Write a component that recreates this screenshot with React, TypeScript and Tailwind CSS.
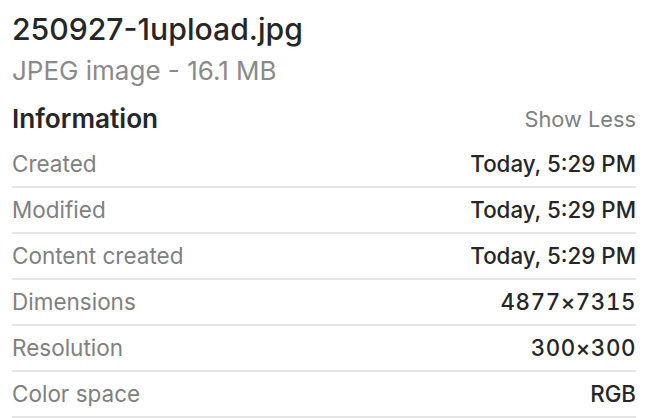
const rows = [
  { label: "Created", value: "Today, 5:29 PM", numeric: false },
  { label: "Modified", value: "Today, 5:29 PM", numeric: false },
  { label: "Content created", value: "Today, 5:29 PM", numeric: false },
  { label: "Dimensions", value: "4877×7315", numeric: true },
  { label: "Resolution", value: "300×300", numeric: true },
  { label: "Color space", value: "RGB", numeric: false },
];

export default function App() {
  return (
    <div className="w-[648px] h-[418px] overflow-hidden bg-white px-3 font-['Inter',sans-serif]">
      <div>
        <h1 className="text-[30.2px] leading-[58px] font-medium text-[#262626]">250927-1upload.jpg</h1>
        <p className="text-[26px] leading-[26px] text-[#8a8a8a]">JPEG image - 16.1 MB</p>
      </div>

      <div className="flex items-center justify-between h-[46px] mt-[12px]">
        <h2 className="text-[26.2px] font-semibold text-[#262626]">Information</h2>
        <button className="text-[21.8px] text-[#808080]">Show Less</button>
      </div>

      <ul>
        {rows.map((row) => (
          <li
            key={row.label}
            className="flex items-center justify-between h-[46px] border-b-2 border-[#e5e5e5]"
          >
            <span className="text-[22.5px] text-[#808080]">{row.label}</span>
            <span
              className={
                row.numeric
                  ? "text-[22.3px] font-medium text-[#262626] tabular-nums tracking-[0.6px]"
                  : "text-[22.3px] font-medium text-[#262626]"
              }
            >
              {row.value}
            </span>
          </li>
        ))}
      </ul>
    </div>
  );
}
